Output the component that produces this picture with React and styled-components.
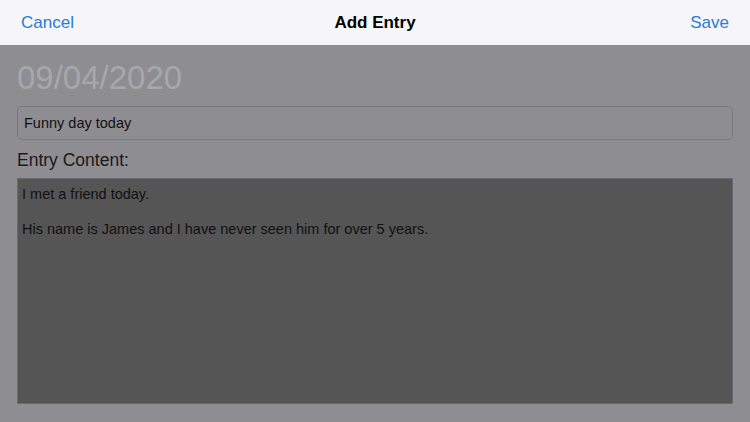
import React from "react";
import styled, { createGlobalStyle } from "styled-components";

const GlobalStyle = createGlobalStyle`
  html, body {
    margin: 0;
    padding: 0;
    width: 750px;
    height: 422px;
    overflow: hidden;
    background: #8e8d92;
    font-family: "Liberation Sans", Arial, sans-serif;
  }
`;

const Screen = styled.div`
  width: 750px;
  height: 422px;
  display: flex;
  flex-direction: column;
  background: #8e8d92;
`;

const NavBar = styled.div`
  height: 45px;
  flex: 0 0 45px;
  background: #f6f6f8;
  display: grid;
  grid-template-columns: 1fr auto 1fr;
  align-items: center;
  padding: 0 21px;
  box-sizing: border-box;
`;

const NavButton = styled.span`
  color: #2a7ad8;
  font-size: 17px;
  justify-self: ${(p) => (p.$right ? "end" : "start")};
`;

const NavTitle = styled.span`
  color: #000;
  font-size: 17px;
  font-weight: bold;
`;

const Body = styled.div`
  flex: 1;
  display: flex;
  flex-direction: column;
  padding: 0 17px 18px;
`;

const DateText = styled.div`
  font-size: 33px;
  color: #a8a7ac;
  margin-top: 16px;
  line-height: 34px;
`;

const TitleBox = styled.div`
  margin-top: 11px;
  height: 34px;
  border: 1px solid #79787d;
  border-radius: 5px;
  box-sizing: border-box;
  display: flex;
  align-items: center;
  padding: 0 6px;
  font-size: 14.5px;
  color: #111;
`;

const Label = styled.div`
  margin-top: 10px;
  font-size: 17.5px;
  color: #1a1a1c;
  line-height: 20px;
`;

const ContentBox = styled.div`
  margin-top: 8px;
  flex: 1;
  background: #555555;
  border: 1px solid #6a696e;
  padding: 7px 4px;
  font-size: 14.5px;
  color: #111;
`;

const Para = styled.p`
  margin: 0 0 18px;
  line-height: 17px;
`;

export default function App() {
  return (
    <>
      <GlobalStyle />
      <Screen>
        <NavBar>
          <NavButton>Cancel</NavButton>
          <NavTitle>Add Entry</NavTitle>
          <NavButton $right>Save</NavButton>
        </NavBar>
        <Body>
          <DateText>09/04/2020</DateText>
          <TitleBox>Funny day today</TitleBox>
          <Label>Entry Content:</Label>
          <ContentBox>
            <Para>I met a friend today.</Para>
            <Para>His name is James and I have never seen him for over 5 years.</Para>
          </ContentBox>
        </Body>
      </Screen>
    </>
  );
}
